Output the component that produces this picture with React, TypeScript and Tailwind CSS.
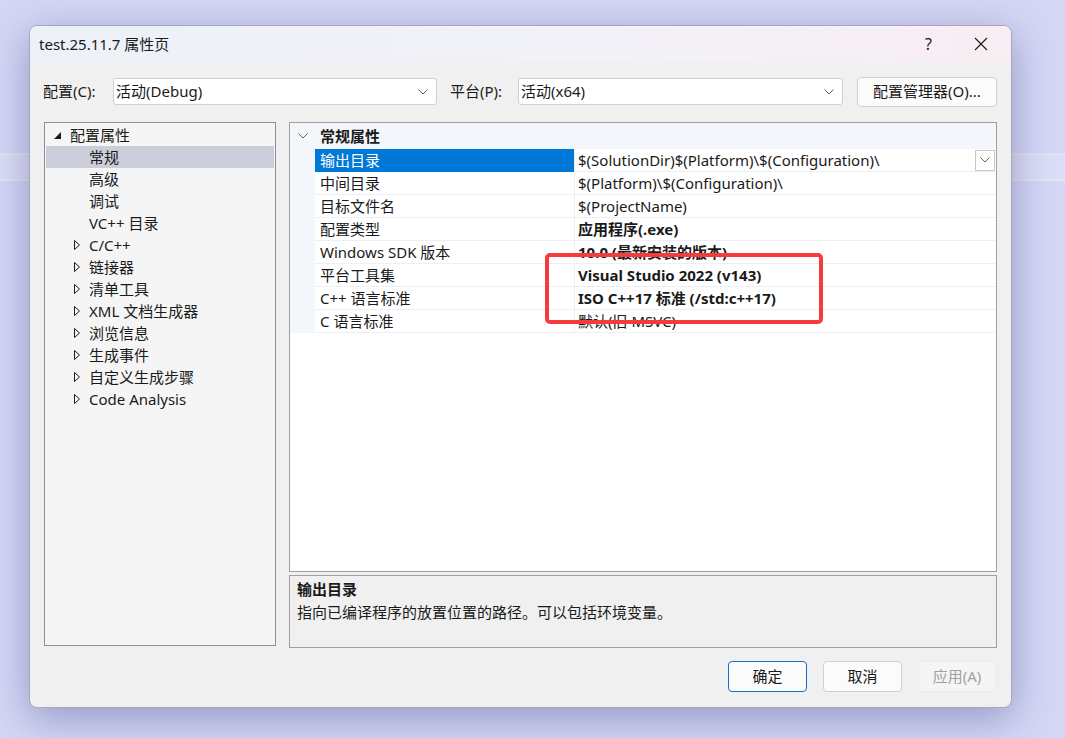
import React from "react";

const FONT = { fontFamily: '"Noto Sans", "Noto Sans CJK SC", sans-serif' };

function Chevron({ className = "" }: { className?: string }) {
  return (
    <svg width="10" height="6" viewBox="0 0 10 6" className={className}>
      <polyline points="0.5,0.5 5,5 9.5,0.5" fill="none" stroke="#606060" strokeWidth="1" />
    </svg>
  );
}

function Select({ value, width }: { value: string; width: string }) {
  return (
    <div className={`${width} h-[27px] bg-white border border-[#cfcfcf] rounded-[3px] flex items-center pl-[2px] pr-[8px]`}>
      <span className="flex-1 text-[15px] text-[#1a1a1a]">{value}</span>
      <Chevron />
    </div>
  );
}

const treeItems: { label: string; level: 0 | 1; arrow?: "open" | "closed"; selected?: boolean }[] = [
  { label: "配置属性", level: 0, arrow: "open" },
  { label: "常规", level: 1, selected: true },
  { label: "高级", level: 1 },
  { label: "调试", level: 1 },
  { label: "VC++ 目录", level: 1 },
  { label: "C/C++", level: 1, arrow: "closed" },
  { label: "链接器", level: 1, arrow: "closed" },
  { label: "清单工具", level: 1, arrow: "closed" },
  { label: "XML 文档生成器", level: 1, arrow: "closed" },
  { label: "浏览信息", level: 1, arrow: "closed" },
  { label: "生成事件", level: 1, arrow: "closed" },
  { label: "自定义生成步骤", level: 1, arrow: "closed" },
  { label: "Code Analysis", level: 1, arrow: "closed" },
];

const props: { name: string; value: string; bold?: boolean }[] = [
  { name: "输出目录", value: "$(SolutionDir)$(Platform)\\$(Configuration)\\" },
  { name: "中间目录", value: "$(Platform)\\$(Configuration)\\" },
  { name: "目标文件名", value: "$(ProjectName)" },
  { name: "配置类型", value: "应用程序(.exe)", bold: true },
  { name: "Windows SDK 版本", value: "10.0 (最新安装的版本)", bold: true },
  { name: "平台工具集", value: "Visual Studio 2022 (v143)", bold: true },
  { name: "C++ 语言标准", value: "ISO C++17 标准 (/std:c++17)", bold: true },
  { name: "C 语言标准", value: "默认(旧 MSVC)" },
];

function TreeRow({ item }: { item: (typeof treeItems)[number] }) {
  return (
    <div className={`h-[22px] flex items-center text-[15px] text-[#1a1a1a] ${item.selected ? "bg-[#cbcdda]" : ""}`}>
      {item.level === 0 ? (
        <>
          <div className="w-[24px] flex justify-end pr-[9px]">
            <svg width="7" height="7" viewBox="0 0 7 7">
              <polygon points="7,0 7,7 0,7" fill="#1a1a1a" />
            </svg>
          </div>
          <span>{item.label}</span>
        </>
      ) : (
        <>
          <div className="w-[43px] flex justify-end pr-[9px]">
            {item.arrow === "closed" && (
              <svg width="6" height="10" viewBox="0 0 6 10">
                <polygon points="0.5,0.5 5.5,5 0.5,9.5" fill="none" stroke="#1a1a1a" strokeWidth="1" />
              </svg>
            )}
          </div>
          <span>{item.label}</span>
        </>
      )}
    </div>
  );
}

export default function App() {
  return (
    <div className="relative w-full h-[738px] overflow-hidden bg-[#d4d7f6] pl-[29px] pt-[25px]" style={FONT}>
      {/* faint bands of the window behind */}
      <div className="absolute left-0 right-0 top-[153px] h-[28px] bg-[#dcdef7] border-y-2 border-[#e4e4f0]" />

      <div className="relative w-[983px] h-[683px] rounded-[8px] border border-[#a6a8b8] bg-[#f0f0f0] shadow-[0_10px_40px_rgba(70,72,130,0.45)] flex flex-col overflow-hidden">
        {/* title bar */}
        <div className="h-[36px] flex items-center bg-gradient-to-r from-[#eef0f8] via-[#f1f2f8] to-[#f8eef4]">
          <span className="ml-[9px] text-[15px] text-[#1a1a1a]">test.25.11.7 属性页</span>
          <div className="flex-1" />
          <span className="text-[16px] text-[#1a1a1a] mr-[42px]">?</span>
          <svg width="14" height="14" viewBox="0 0 14 14" className="mr-[23px]">
            <path d="M1 1 L13 13 M13 1 L1 13" stroke="#1a1a1a" strokeWidth="1.1" />
          </svg>
        </div>

        {/* config row */}
        <div className="mt-[15px] h-[29px] flex items-center pl-[13px]">
          <span className="w-[70px] text-[15px] text-[#1a1a1a]">配置(C):</span>
          <Select value="活动(Debug)" width="w-[324px]" />
          <span className="ml-[13px] w-[68px] text-[15px] text-[#1a1a1a]">平台(P):</span>
          <Select value="活动(x64)" width="w-[325px]" />
          <button className="ml-[14px] w-[140px] h-[30px] bg-[#fbfbfb] border border-[#d0d0d0] rounded-[4px] text-[15px] text-[#1a1a1a]">
            配置管理器(O)...
          </button>
        </div>

        {/* main area */}
        <div className="mt-[16px] h-[526px] flex pl-[14px] pr-[14px]">
          <div className="w-[232px] h-[524px] border border-[#8c9099] bg-[#f5f5f5] pt-[1px] px-[1px]">
            {treeItems.map((it) => (
              <TreeRow key={it.label} item={it} />
            ))}
          </div>

          <div className="ml-[13px] flex-1 flex flex-col">
            <div className="relative h-[450px] border border-[#a0a0a0] bg-white">
              <div className="h-[26px] flex items-center bg-[#f3f6fb]">
                <div className="w-[25px] flex justify-center">
                  <Chevron />
                </div>
                <span className="ml-[5px] text-[15px] font-bold text-[#1a1a1a]">常规属性</span>
              </div>
              {props.map((p, i) => (
                <div key={p.name} className="h-[23px] flex">
                  <div className="w-[25px] bg-[#f3f6fb]" />
                  <div
                    className={`w-[259px] flex items-center pl-[5px] text-[15px] border-b ${
                      i === 0 ? "bg-[#0078d7] text-white border-[#0078d7]" : "text-[#1a1a1a] border-[#eceff4]"
                    }`}
                  >
                    {p.name}
                  </div>
                  <div className="flex-1 flex items-center pl-[3px] border-l border-b border-[#eceff4]">
                    <span className={`flex-1 text-[15px] text-[#1a1a1a] ${p.bold ? "font-bold" : ""}`}>{p.value}</span>
                    {i === 0 && (
                      <div className="w-[20px] h-[21px] mr-[1px] border border-[#c8c8c8] bg-white flex items-center justify-center">
                        <Chevron />
                      </div>
                    )}
                  </div>
                </div>
              ))}
              <div className="absolute left-[255px] top-[130px] w-[278px] h-[71px] border-[4px] border-[#f53b3d] rounded-[5px]" />
            </div>

            <div className="mt-[3px] h-[73px] border border-[#a0a0a0] bg-[#f0f0f0] px-[7px] pt-[1px]">
              <div className="text-[15px] font-bold text-[#1a1a1a] leading-[24px]">输出目录</div>
              <div className="text-[15px] text-[#1a1a1a] leading-[22px]">指向已编译程序的放置位置的路径。可以包括环境变量。</div>
            </div>
          </div>
        </div>

        {/* buttons */}
        <div className="mt-[13px] flex justify-end gap-[16px] pr-[15px]">
          <button className="w-[79px] h-[31px] rounded-[4px] border border-[#1a6fc4] bg-[#fbfbfb] text-[15px] text-[#1a1a1a]">确定</button>
          <button className="w-[79px] h-[31px] rounded-[4px] border border-[#d0d0d0] bg-[#fbfbfb] text-[15px] text-[#1a1a1a]">取消</button>
          <button className="w-[78px] h-[31px] rounded-[4px] border border-[#ebebeb] bg-[#f5f5f5] text-[15px] text-[#a0a0a0]">应用(A)</button>
        </div>
      </div>
    </div>
  );
}
